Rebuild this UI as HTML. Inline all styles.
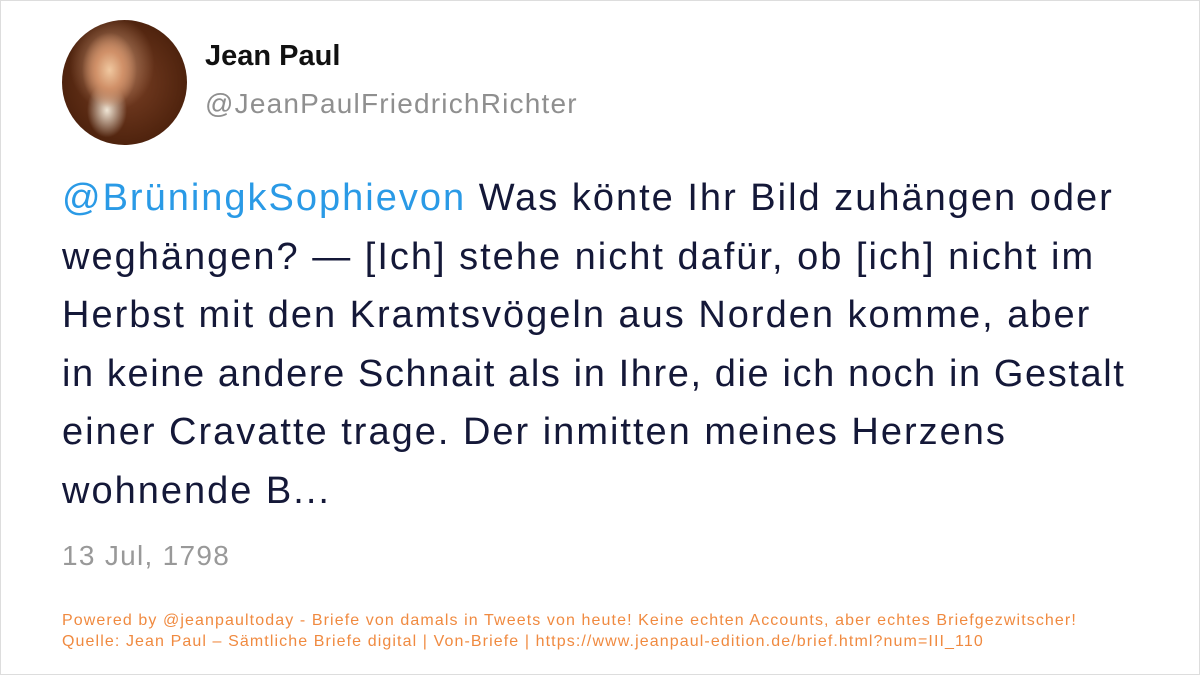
<!DOCTYPE html>
<html><head><meta charset="utf-8"><style>
html,body{margin:0;padding:0;}
body{width:1200px;height:675px;position:relative;background:#fff;font-family:"Liberation Sans",sans-serif;overflow:hidden;}
.frame{position:absolute;left:0;top:0;width:1198px;height:673px;border:1px solid #ddd;}
.av{position:absolute;left:62px;top:20px;width:125px;height:125px;border-radius:50%;
background:radial-gradient(ellipse 22% 30% at 38% 40%,#f0c8a0 0%,#d09068 50%,rgba(150,80,40,0) 100%),
radial-gradient(ellipse 34% 38% at 40% 35%,#c09070 0%,rgba(160,100,60,0) 100%),
radial-gradient(ellipse 16% 22% at 36% 72%,#f0e6d6 0%,rgba(220,200,170,0) 100%),
radial-gradient(circle at 50% 50%,#7a4025 0%,#52250f 65%,#3a180a 100%);}
.name{position:absolute;left:205px;top:40px;font-size:29px;font-weight:bold;color:#111;}
.handle{position:absolute;left:205px;top:88px;font-size:28px;letter-spacing:1.2px;color:#8f8f8f;}
.body{position:absolute;left:62px;top:169px;font-size:38px;letter-spacing:2px;line-height:58.5px;color:#141838;white-space:nowrap;}
.m{color:#2a9ae6;}
.date{position:absolute;left:62px;top:540px;font-size:28px;letter-spacing:1.3px;color:#999;}
.foot{position:absolute;left:62px;top:610px;font-size:16px;letter-spacing:1.1px;line-height:21px;color:#f08a40;white-space:nowrap;}
</style></head><body>
<div class="frame"></div>
<div class="av"></div>
<div class="name">Jean Paul</div>
<div class="handle">@JeanPaulFriedrichRichter</div>
<div class="body"><span class="m">@BrüningkSophievon</span> Was könte Ihr Bild zuhängen oder<br>weghängen? — [Ich] stehe nicht dafür, ob [ich] nicht im<br>Herbst mit den Kramtsvögeln aus Norden komme, aber<br><span style="letter-spacing:1.6px">in keine andere Schnait als in Ihre, die ich noch in Gestalt</span><br>einer Cravatte trage. Der inmitten meines Herzens<br>wohnende B...</div>
<div class="date">13 Jul, 1798</div>
<div class="foot">Powered by @jeanpaultoday - Briefe von damals in Tweets von heute! Keine echten Accounts, aber echtes Briefgezwitscher!<br>Quelle: Jean Paul – Sämtliche Briefe digital | Von-Briefe | https://www.jeanpaul-edition.de/brief.html?num=III_110</div>
</body></html>
